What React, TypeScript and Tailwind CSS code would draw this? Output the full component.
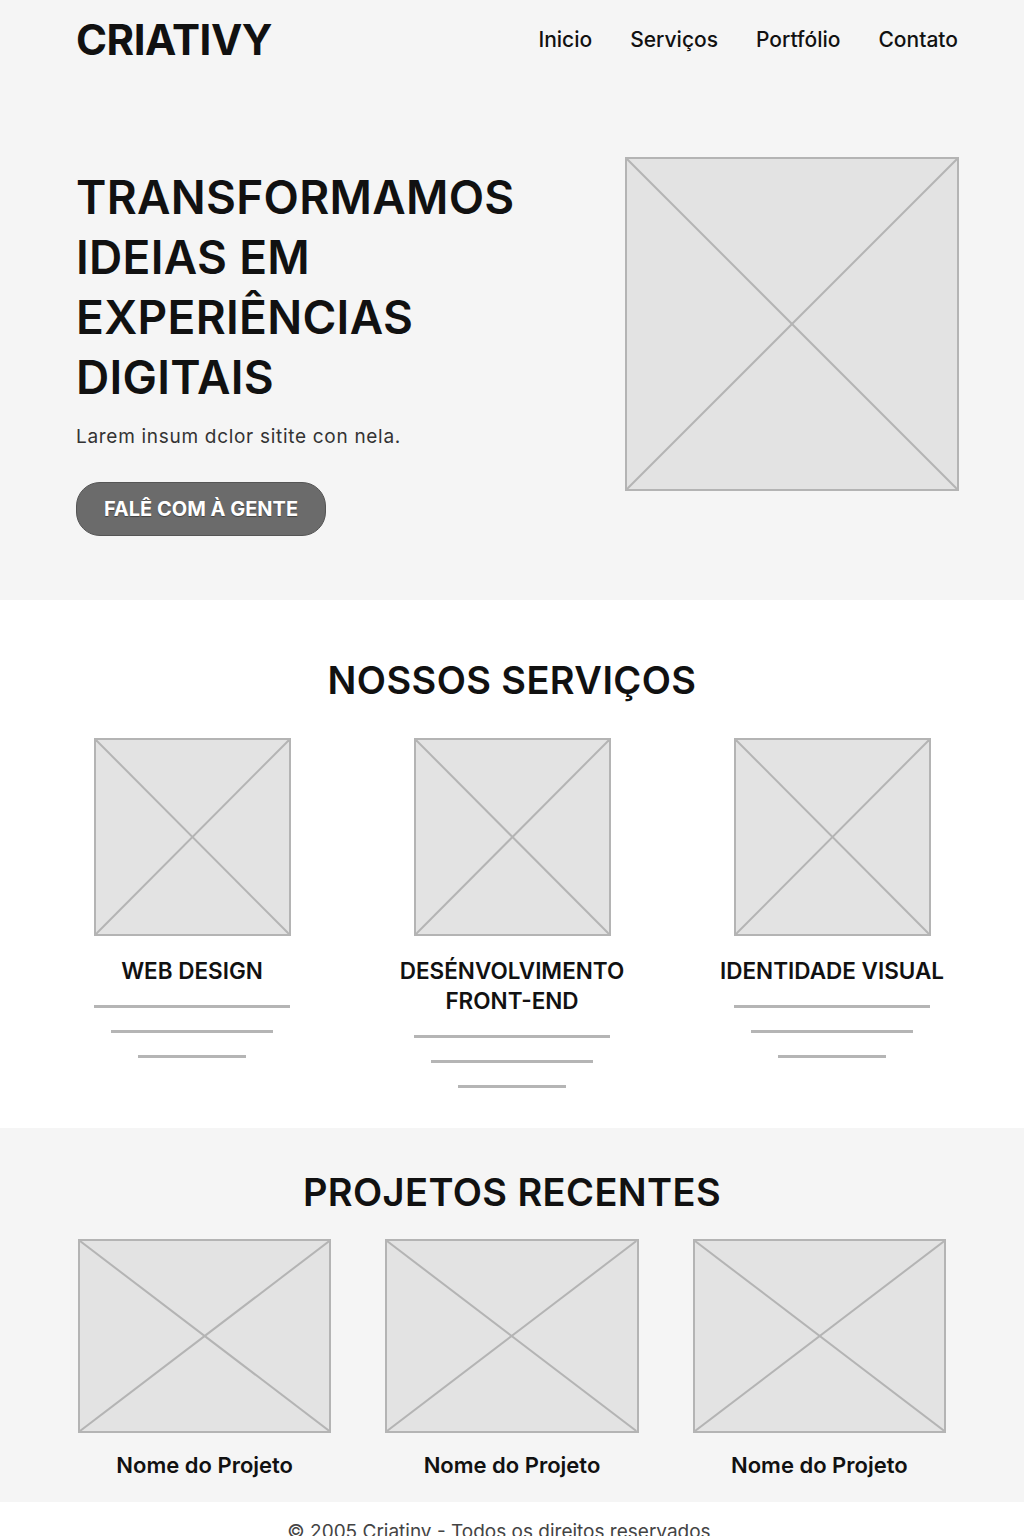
// App.tsx — CRIATIVY wireframe landing: hero, services, recent projects.

const NAV = ["Inicio", "Serviços", "Portfólio", "Contato"];

const SERVICES = [
  { title: ["WEB DESIGN"] },
  { title: ["DESÉNVOLVIMENTO", "FRONT-END"] },
  { title: ["IDENTIDADE VISUAL"] },
];

const PROJECTS = ["Nome do Projeto", "Nome do Projeto", "Nome do Projeto"];

function Placeholder({ className }: { className: string }) {
  return (
    <div className={`relative border-2 border-[#b4b4b4] bg-[#e3e3e3] ${className}`}>
      <svg className="absolute inset-0 h-full w-full" viewBox="0 0 100 100" preserveAspectRatio="none">
        <line x1="0" y1="0" x2="100" y2="100" stroke="#b4b4b4" strokeWidth="2" vectorEffect="non-scaling-stroke" />
        <line x1="100" y1="0" x2="0" y2="100" stroke="#b4b4b4" strokeWidth="2" vectorEffect="non-scaling-stroke" />
      </svg>
    </div>
  );
}

export default function App() {
  return (
    <div className="min-h-screen bg-white text-[#111] font-['Inter',sans-serif]">
      <div className="bg-[#f5f5f5]">
        <header className="flex h-[80px] items-center justify-between pl-[76px] pr-[66px]">
          <div className="text-[42px] font-bold tracking-[-0.5px] leading-none">CRIATIVY</div>
          <nav className="flex gap-[38px] text-[21px] font-medium">
            {NAV.map((n) => (
              <a key={n} href="#">
                {n}
              </a>
            ))}
          </nav>
        </header>

        <section className="flex h-[520px] items-start justify-between pl-[76px] pr-[65px] pt-[77px]">
          <div className="mt-[10px]">
            <h1 className="text-[46px] font-semibold leading-[60px] tracking-[0.3px]">
              TRANSFORMAMOS
              <br />
              IDEIAS EM
              <br />
              EXPERIÊNCIAS
              <br />
              DIGITAIS
            </h1>
            <p className="mt-[16px] text-[19px] leading-[28px] tracking-[0.7px] text-[#333]">
              Larem insum dclor sitite con nela.
            </p>
            <button className="mt-[31px] h-[54px] w-[250px] rounded-[24px] border border-[#555] bg-[#6b6b6b] text-[20px] font-bold text-white [text-shadow:0_1px_1px_rgba(0,0,0,0.4)]">
              FALÊ COM À GENTE
            </button>
          </div>
          <Placeholder className="h-[334px] w-[334px]" />
        </section>
      </div>

      <section className="h-[528px] pt-[56px]">
        <h2 className="text-center text-[38px] font-semibold leading-[48px] tracking-[0.4px]">NOSSOS SERVIÇOS</h2>
        <div className="mx-auto mt-[34px] grid w-[960px] grid-cols-3">
          {SERVICES.map((s, i) => (
            <div key={i} className="flex flex-col items-center">
              <Placeholder className="h-[198px] w-[197px]" />
              <h3 className="mt-[20px] text-center text-[22.5px] font-semibold leading-[30px]">
                {s.title.map((t) => (
                  <div key={t}>{t}</div>
                ))}
              </h3>
              <div className="mt-[19px] flex flex-col items-center gap-[22px]">
                <div className="h-[3px] w-[196px] bg-[#b5b5b5]" />
                <div className="h-[3px] w-[162px] bg-[#b5b5b5]" />
                <div className="h-[3px] w-[108px] bg-[#b5b5b5]" />
              </div>
            </div>
          ))}
        </div>
      </section>

      <section className="h-[374px] bg-[#f5f5f5] pt-[40px]">
        <h2 className="text-center text-[38px] font-semibold leading-[48px] tracking-[0.4px]">PROJETOS RECENTES</h2>
        <div className="mx-auto mt-[23px] grid w-[868px] grid-cols-3 gap-[54px]">
          {PROJECTS.map((p, i) => (
            <div key={i} className="flex flex-col items-center">
              <Placeholder className="h-[194px] w-full" />
              <div className="mt-[17px] text-[22px] font-semibold leading-[30px]">{p}</div>
            </div>
          ))}
        </div>
      </section>

      <footer className="pt-[16px] pb-6 pr-[26px] text-center text-[19px] text-[#444]">
        © 2005 Criatiny - Todos os direitos reservados
      </footer>
    </div>
  );
}
